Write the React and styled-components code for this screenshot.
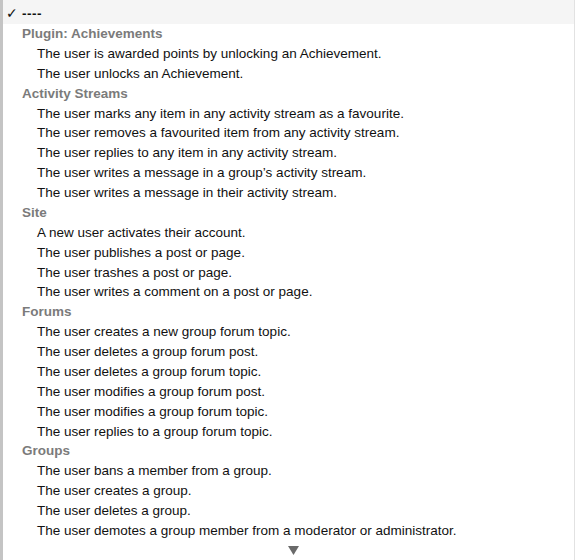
import React from 'react';
import styled, { createGlobalStyle } from 'styled-components';

const GlobalStyle = createGlobalStyle`
    html, body { margin: 0; padding: 0; background: #ffffff; }
    body { font-family: "Liberation Sans", Arial, sans-serif; }
`;

// 메뉴 데이터
const groups = [
    {
        title: 'Plugin: Achievements',
        items: [
            'The user is awarded points by unlocking an Achievement.',
            'The user unlocks an Achievement.'
        ]
    },
    {
        title: 'Activity Streams',
        items: [
            'The user marks any item in any activity stream as a favourite.',
            'The user removes a favourited item from any activity stream.',
            'The user replies to any item in any activity stream.',
            'The user writes a message in a group\u2019s activity stream.',
            'The user writes a message in their activity stream.'
        ]
    },
    {
        title: 'Site',
        items: [
            'A new user activates their account.',
            'The user publishes a post or page.',
            'The user trashes a post or page.',
            'The user writes a comment on a post or page.'
        ]
    },
    {
        title: 'Forums',
        items: [
            'The user creates a new group forum topic.',
            'The user deletes a group forum post.',
            'The user deletes a group forum topic.',
            'The user modifies a group forum post.',
            'The user modifies a group forum topic.',
            'The user replies to a group forum topic.'
        ]
    },
    {
        title: 'Groups',
        items: [
            'The user bans a member from a group.',
            'The user creates a group.',
            'The user deletes a group.',
            'The user demotes a group member from a moderator or administrator.'
        ]
    }
];

const App = () => (
    <>
        <GlobalStyle />
        <Menu>
            <TopBand>
                <Row>
                    <Check>✓</Check>
                    <Selected>----</Selected>
                </Row>
            </TopBand>
            {groups.map(group => (
                <React.Fragment key={group.title}>
                    <Header>{group.title}</Header>
                    {group.items.map(item => (
                        <Item key={item}>{item}</Item>
                    ))}
                </React.Fragment>
            ))}
            <ScrollArrow>
                <svg width="11" height="9" viewBox="0 0 11 9">
                    <path d="M0 0 H11 L5.5 9 Z" fill="#6a6a6a" />
                </svg>
            </ScrollArrow>
        </Menu>
    </>
);

// 메뉴 외곽
const Menu = styled.div`
    width: 575px;
    height: 560px;
    box-sizing: border-box;
    border-left: 3px solid #c4c4c4;
    border-right: 1px solid #e2e2e2;
    background: #ffffff;
    overflow: hidden;
    font-size: 13.5px;
    color: #111;
`;

// 상단 선택 줄 배경
const TopBand = styled.div`
    background: #f5f5f5;
    padding-top: 3px;
    padding-bottom: 1px;
`;

const Row = styled.div`
    display: flex;
    align-items: center;
    height: 20px;
`;

const Check = styled.span`
    width: 16px;
    padding-left: 3px;
    font-size: 14px;
    font-family: "DejaVu Sans", sans-serif;
    color: #111;
`;

const Selected = styled.span`
    font-weight: bold;
    letter-spacing: 0.5px;
    color: #111;
`;

// 그룹 제목
const Header = styled.div`
    height: 19.88px;
    line-height: 19.88px;
    padding-left: 19px;
    font-weight: bold;
    color: #7b7b7b;
    white-space: nowrap;
`;

// 항목
const Item = styled.div`
    height: 19.88px;
    line-height: 19.88px;
    padding-left: 34px;
    color: #111;
    white-space: nowrap;
`;

const ScrollArrow = styled.div`
    display: flex;
    justify-content: center;
    padding-top: 5px;
    padding-left: 10px;
`;

export default App;
